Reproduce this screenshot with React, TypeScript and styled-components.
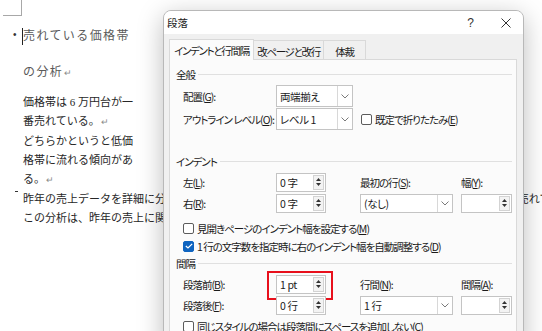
import React from 'react'
import styled, { createGlobalStyle } from 'styled-components'

const GlobalStyle = createGlobalStyle`
  html, body {
    margin: 0;
    padding: 0;
    background: #fff;
  }
  body {
    font-family: "Noto Sans CJK JP", sans-serif;
  }
`

const Screen = styled.div`
  position: relative;
  width: 542px;
  height: 331px;
  overflow: hidden;
  background: #fff;
`

/* ---------- document behind the dialog ---------- */

const Page = styled.div`
  display: flex;
  flex-direction: column;
`

const CropMark = styled.div`
  width: 18px;
  height: 15px;
  margin-left: 3px;
  border-right: 1px solid #a8a8a8;
  border-bottom: 1px solid #a8a8a8;
`

const Para = styled.div<{ $top?: number }>`
  display: flex;
  margin-top: ${p => p.$top ?? 0}px;
`

const Gutter = styled.div`
  width: 23px;
  flex-shrink: 0;
`

const Bullet = styled.span`
  display: block;
  padding-left: 13px;
  font-family: "Liberation Sans", sans-serif;
  font-size: 10px;
  line-height: 36px;
  color: #333;
`

const Dash = styled.span`
  display: block;
  width: 3px;
  height: 1px;
  margin: 1px 0 0 15px;
  background: #333;
`

const Heading = styled.div`
  font-family: "Noto Sans CJK JP", sans-serif;
  font-size: 12px;
  letter-spacing: 1.4px;
  line-height: 36px;
  color: #5a5a5a;
`

const Caret = styled.span`
  display: inline-block;
  width: 1px;
  height: 17px;
  margin-left: -1px;
  vertical-align: middle;
  background: #222;
`

const Body = styled.div`
  font-family: "Liberation Serif", "Noto Sans CJK JP", serif;
  font-size: 11px;
  line-height: 19px;
  color: #272727;
  white-space: nowrap;
`

const Mark = styled.span`
  color: #8a8a8a;
  font-size: 9px;
  margin-left: 1px;
`

/* ---------- dialog window ---------- */

const Dialog = styled.div`
  position: absolute;
  left: 163px;
  top: 10px;
  width: 359px;
  height: 340px;
  border: 1px solid #b8b8b8;
  border-radius: 8px 8px 0 0;
  background: #f0f0f0;
  box-shadow: 0 6px 26px rgba(0, 0, 0, 0.26);
  display: flex;
  flex-direction: column;
  overflow: hidden;
  font-family: "Noto Sans CJK JP", sans-serif;
  font-size: 10.5px;
  letter-spacing: -1px;
  color: #1a1a1a;
  font-feature-settings: "palt";
  white-space: nowrap;

  u {
    text-underline-offset: 1px;
  }
`

const TitleBar = styled.div`
  height: 23px;
  display: flex;
  align-items: center;
  padding-left: 3px;
  background: #fff;
`

const Title = styled.span`
  flex: 1;
  letter-spacing: 0;
`

const TitleButton = styled.div`
  width: 35px;
  height: 23px;
  display: flex;
  align-items: center;
  justify-content: center;
  font-family: "Liberation Sans", sans-serif;
  font-size: 12px;
  letter-spacing: 0;
  color: #333;
`

const TabStrip = styled.div`
  height: 25px;
  display: flex;
  align-items: flex-end;
  padding-left: 5px;
`

const Tab = styled.div<{ $active?: boolean; $w: number }>`
  width: ${p => p.$w}px;
  height: ${p => (p.$active ? 21 : 19)}px;
  box-sizing: border-box;
  display: flex;
  align-items: center;
  justify-content: center;
  border: 1px solid #d9d9d9;
  border-bottom: none;
  margin-right: -1px;
  margin-bottom: ${p => (p.$active ? -1 : 0)}px;
  background: ${p => (p.$active ? '#fbfbfb' : '#f0f0f0')};
  position: relative;
  z-index: ${p => (p.$active ? 1 : 0)};
  padding-top: ${p => (p.$active ? 1 : 2)}px;
  letter-spacing: -1.3px;
`

const Panel = styled.div`
  flex: 1;
  margin: 0 6px 0 5px;
  border: 1px solid #d9d9d9;
  background: #fbfbfb;
  padding: 6px 4px 0 6px;
  display: flex;
  flex-direction: column;
`

const SectionTitle = styled.div<{ $top?: number }>`
  height: 16px;
  margin-top: ${p => p.$top ?? 0}px;
  display: flex;
  align-items: center;
  gap: 3px;

  &::after {
    content: '';
    flex: 1;
    height: 1px;
    background: #e0e0e0;
  }
`

const Rows = styled.div<{ $top?: number }>`
  margin-top: ${p => p.$top ?? 0}px;
  padding-left: 7px;
  display: flex;
  flex-direction: column;
  gap: 1px;
`

const Row = styled.div`
  height: 22px;
  display: flex;
  align-items: center;
`

const Label = styled.div<{ $area?: string }>`
  width: 93px;
  flex-shrink: 0;
  grid-area: ${p => p.$area ?? 'auto'};
`

const FieldGrid = styled.div<{ $top?: number }>`
  margin-top: ${p => p.$top ?? 0}px;
  padding-left: 7px;
  display: grid;
  grid-template-columns: 93px 50px 34px 93px 8px 51px;
  grid-template-rows: 20px 20px;
  row-gap: 1px;
  align-items: center;
  grid-template-areas:
    "l1 f1 . l3 . l4"
    "l2 f2 . f3 . f4";
`

const Select = styled.div<{ $w: number; $h: number; $area?: string }>`
  width: ${p => p.$w}px;
  height: ${p => p.$h}px;
  flex-shrink: 0;
  grid-area: ${p => p.$area ?? 'auto'};
  box-sizing: border-box;
  display: flex;
  border: 1px solid #c4c4c4;
  background: #fff;
`

const Value = styled.div`
  flex: 1;
  display: flex;
  align-items: center;
  padding-left: 3px;
  letter-spacing: -0.4px;
`

const SelectArrow = styled.div`
  width: 14px;
  display: flex;
  align-items: center;
  justify-content: center;
  border-left: 1px solid #d8d8d8;
`

const Spin = styled.div<{ $w: number; $area?: string; $highlight?: boolean }>`
  position: relative;
  width: ${p => p.$w}px;
  height: 19px;
  grid-area: ${p => p.$area ?? 'auto'};
  box-sizing: border-box;
  display: flex;
  border: 1px solid #c4c4c4;
  background: #fff;

  &::after {
    content: '';
    display: ${p => (p.$highlight ? 'block' : 'none')};
    position: absolute;
    left: -10px;
    top: -5px;
    right: -8px;
    bottom: -7px;
    border: 2px solid #e8101c;
  }
`

const SpinButtons = styled.div`
  width: 11px;
  margin: 1px;
  box-sizing: border-box;
  border: 1px solid #d3d3d3;
  background: #f3f3f3;
  display: flex;
  flex-direction: column;
  align-items: center;
  justify-content: center;
  gap: 2px;
`

const CheckRow = styled.div<{ $top?: number; $inset?: number }>`
  height: 18px;
  margin-top: ${p => p.$top ?? 0}px;
  padding-left: ${p => p.$inset ?? 7}px;
  display: flex;
  align-items: center;
  gap: 3px;
`

const Box = styled.span<{ $checked?: boolean }>`
  width: 11px;
  height: 11px;
  box-sizing: border-box;
  border-radius: 2px;
  border: 1px solid ${p => (p.$checked ? '#0f64c0' : '#5c5c5c')};
  background: ${p => (p.$checked ? '#0f64c0' : '#fff')};
  display: flex;
  align-items: center;
  justify-content: center;
  flex-shrink: 0;
`

const Chevron = () => (
  <svg width="8" height="5" viewBox="0 0 8 5">
    <path d="M0.5 0.5 L4 4 L7.5 0.5" fill="none" stroke="#7a7a7a" strokeWidth="1" />
  </svg>
)

const Arrows = () => (
  <SpinButtons>
    <svg width="5" height="3" viewBox="0 0 5 3">
      <path d="M2.5 0 L5 3 L0 3 Z" fill="#333" />
    </svg>
    <svg width="5" height="3" viewBox="0 0 5 3">
      <path d="M0 0 L5 0 L2.5 3 Z" fill="#333" />
    </svg>
  </SpinButtons>
)

const CheckOption = ({ checked, top, inset, children }: { checked?: boolean; top?: number; inset?: number; children: React.ReactNode }) => (
  <CheckRow $top={top} $inset={inset}>
    <Box $checked={checked}>
      {checked && (
        <svg width="8" height="6" viewBox="0 0 8 6">
          <path d="M0.8 3 L3 5 L7.2 0.8" fill="none" stroke="#fff" strokeWidth="1.2" />
        </svg>
      )}
    </Box>
    <span>{children}</span>
  </CheckRow>
)

const DropDown = ({ w, h, area, children }: { w: number; h: number; area?: string; children?: React.ReactNode }) => (
  <Select $w={w} $h={h} $area={area}>
    <Value>{children}</Value>
    <SelectArrow><Chevron /></SelectArrow>
  </Select>
)

const SpinBox = ({ w, area, highlight, children }: { w: number; area?: string; highlight?: boolean; children?: React.ReactNode }) => (
  <Spin $w={w} $area={area} $highlight={highlight}>
    <Value>{children}</Value>
    <Arrows />
  </Spin>
)

export default function App() {
  return (
    <Screen>
      <GlobalStyle />

      <Page>
        <CropMark />
        <Para $top={1}>
          <Gutter><Bullet>•</Bullet></Gutter>
          <Heading>
            <Caret />売れている価格帯<br />
            の分析<Mark>↵</Mark>
          </Heading>
        </Para>
        <Para $top={2}>
          <Gutter />
          <Body>
            価格帯は 6 万円台が一<br />
            番売れている。<Mark>↵</Mark>
          </Body>
        </Para>
        <Para>
          <Gutter />
          <Body>
            どちらかというと低価<br />
            格帯に流れる傾向があ<br />
            る。<Mark>↵</Mark>
          </Body>
        </Para>
        <Para>
          <Gutter><Dash /></Gutter>
          <Body>
            昨年の売上データを詳細に分析したところ、６万円台の商品が全体の約４割を占め、今年も変わらず売れている。<br />
            この分析は、昨年の売上に関するデータをもとに行ったものです。
          </Body>
        </Para>
      </Page>

      <Dialog>
        <TitleBar>
          <Title>段落</Title>
          <TitleButton>?</TitleButton>
          <TitleButton>
            <svg width="10" height="10" viewBox="0 0 10 10">
              <path d="M0.5 0.5 L9.5 9.5 M9.5 0.5 L0.5 9.5" stroke="#333" strokeWidth="1" />
            </svg>
          </TitleButton>
        </TitleBar>

        <TabStrip>
          <Tab $active $w={85}>インデントと行間隔</Tab>
          <Tab $w={71}>改ページと改行</Tab>
          <Tab $w={43}>体裁</Tab>
        </TabStrip>

        <Panel>
          <SectionTitle>全般</SectionTitle>
          <Rows $top={3}>
            <Row>
              <Label>配置(<u>G</u>):</Label>
              <DropDown w={77} h={22}>両端揃え</DropDown>
            </Row>
            <Row>
              <Label>アウトライン レベル(<u>O</u>):</Label>
              <DropDown w={77} h={22}>レベル 1</DropDown>
              <CheckOption inset={8}>既定で折りたたみ(<u>E</u>)</CheckOption>
            </Row>
          </Rows>

          <SectionTitle $top={23}>インデント</SectionTitle>
          <FieldGrid $top={3}>
            <Label $area="l1">左(<u>L</u>):</Label>
            <SpinBox w={50} area="f1">0 字</SpinBox>
            <Label $area="l3">最初の行(<u>S</u>):</Label>
            <Label $area="l4">幅(<u>Y</u>):</Label>
            <Label $area="l2">右(<u>R</u>):</Label>
            <SpinBox w={50} area="f2">0 字</SpinBox>
            <DropDown w={93} h={19} area="f3">(なし)</DropDown>
            <SpinBox w={51} area="f4" />
          </FieldGrid>

          <CheckOption top={6}>見開きページのインデント幅を設定する(<u>M</u>)</CheckOption>
          <CheckOption checked>1 行の文字数を指定時に右のインデント幅を自動調整する(<u>D</u>)</CheckOption>

          <SectionTitle>間隔</SectionTitle>
          <FieldGrid $top={3}>
            <Label $area="l1">段落前(<u>B</u>):</Label>
            <SpinBox w={50} area="f1" highlight>1 pt</SpinBox>
            <Label $area="l3">行間(<u>N</u>):</Label>
            <Label $area="l4">間隔(<u>A</u>):</Label>
            <Label $area="l2">段落後(<u>F</u>):</Label>
            <SpinBox w={50} area="f2">0 行</SpinBox>
            <DropDown w={93} h={19} area="f3">1 行</DropDown>
            <SpinBox w={51} area="f4" />
          </FieldGrid>

          <CheckOption top={2}>同じスタイルの場合は段落間にスペースを追加しない(<u>C</u>)</CheckOption>
        </Panel>
      </Dialog>
    </Screen>
  )
}
